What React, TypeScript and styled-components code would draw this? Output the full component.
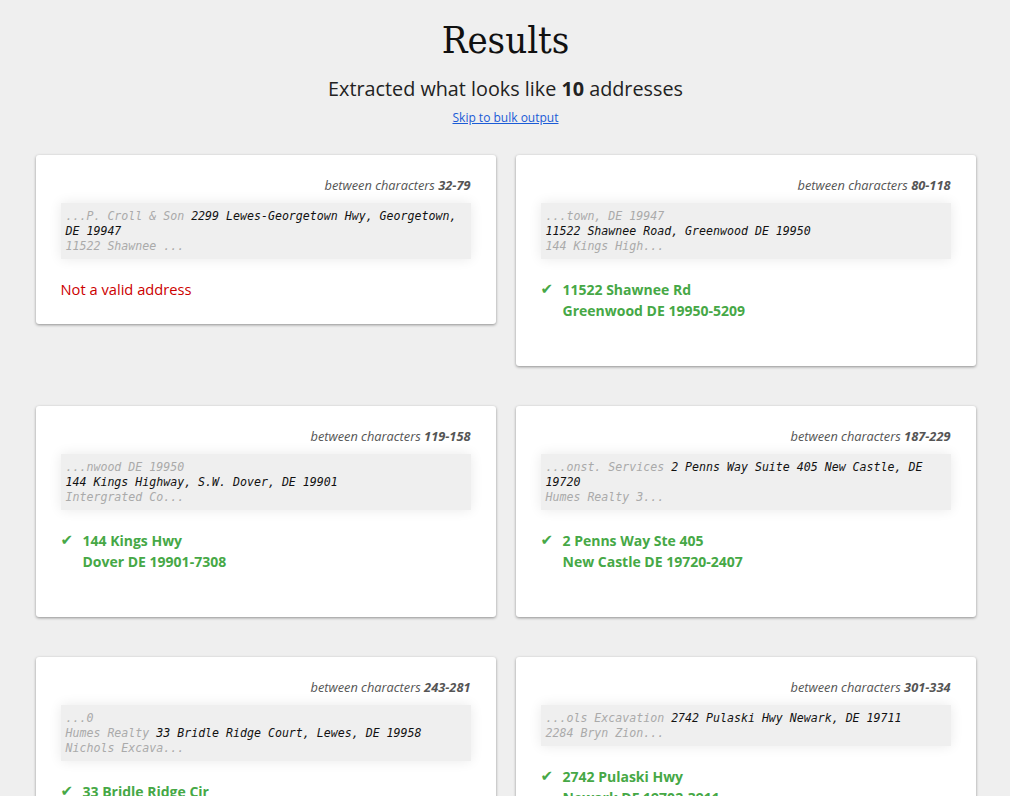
import React from "react";
import styled, { createGlobalStyle } from "styled-components";

const Global = createGlobalStyle`
  html, body { margin: 0; padding: 0; background: #efefef; }
  body { font-family: "Open Sans", "Liberation Sans", sans-serif; color: #222; }
`;

const Page = styled.div`
  width: 940px;
  margin: 0 auto;
  padding: 0 0 40px 1px;
`;

const Header = styled.header`
  text-align: center;
  padding-top: 17px;
`;

const Title = styled.h1`
  margin: 0;
  font-family: "DejaVu Serif Condensed", "DejaVu Serif", serif;
  font-weight: normal;
  font-size: 38px;
  line-height: 46px;
  color: #111;
`;

const Subtitle = styled.p`
  margin: 12px 0 0;
  font-size: 19.8px;
  line-height: 28px;
  color: #222;
  b { font-weight: 700; }
`;

const SkipLink = styled.a`
  display: inline-block;
  margin-top: 7px;
  font-size: 12px;
  line-height: 16px;
  color: #1a5bd6;
  text-decoration: underline;
`;

const Grid = styled.div`
  display: grid;
  grid-template-columns: 460px 460px;
  column-gap: 20px;
  row-gap: 40px;
  align-items: start;
  margin-top: 28px;
`;

const Card = styled.section`
  background: #fff;
  border-radius: 3px;
  box-shadow: 0 1px 3px rgba(0, 0, 0, 0.4);
  padding: 22px 25px 24px;
`;

const Range = styled.div`
  text-align: right;
  font-style: italic;
  font-size: 12.8px;
  line-height: 17px;
  color: #555;
  b { font-weight: 700; }
`;

const Snippet = styled.pre`
  margin: 9px 0 0;
  padding: 6px 5px 5px;
  background: #efefef;
  box-shadow: 0 0 12px rgba(0, 0, 0, 0.09);
  font-family: "DejaVu Sans Mono", "Liberation Mono", monospace;
  font-style: italic;
  font-size: 11.6px;
  line-height: 15px;
  color: #111;
  white-space: pre-wrap;
  word-wrap: break-word;
`;

const Context = styled.span`
  color: #aaa;
`;

const Invalid = styled.div`
  margin-top: 20px;
  font-size: 14.7px;
  line-height: 21px;
  color: #cc0000;
`;

const Valid = styled.div`
  margin-top: 20px;
  margin-bottom: 21px;
  display: flex;
  align-items: flex-start;
  font-size: 14px;
  line-height: 21px;
  font-weight: 700;
  color: #46a846;
`;

const Check = styled.span`
  width: 22px;
  flex: none;
  font-family: "DejaVu Sans", sans-serif;
  font-size: 15px;
  line-height: 21px;
`;

const Lines = styled.div`
  display: flex;
  flex-direction: column;
`;

type Result = {
  range: string;
  before: string;
  match: string;
  after: string;
  valid?: [string, string];
};

const results: Result[] = [
  {
    range: "32-79",
    before: "...P. Croll & Son ",
    match: "2299 Lewes-Georgetown Hwy, Georgetown, DE 19947",
    after: "\n11522 Shawnee ...",
  },
  {
    range: "80-118",
    before: "...town, DE 19947\n",
    match: "11522 Shawnee Road, Greenwood DE 19950",
    after: "\n144 Kings High...",
    valid: ["11522 Shawnee Rd", "Greenwood DE 19950-5209"],
  },
  {
    range: "119-158",
    before: "...nwood DE 19950\n",
    match: "144 Kings Highway, S.W. Dover, DE 19901",
    after: "\nIntergrated Co...",
    valid: ["144 Kings Hwy", "Dover DE 19901-7308"],
  },
  {
    range: "187-229",
    before: "...onst. Services ",
    match: "2 Penns Way Suite 405 New Castle, DE 19720",
    after: "\nHumes Realty 3...",
    valid: ["2 Penns Way Ste 405", "New Castle DE 19720-2407"],
  },
  {
    range: "243-281",
    before: "...0\nHumes Realty ",
    match: "33 Bridle Ridge Court, Lewes, DE 19958",
    after: "\nNichols Excava...",
    valid: ["33 Bridle Ridge Cir", "Lewes DE 19958-8961"],
  },
  {
    range: "301-334",
    before: "...ols Excavation ",
    match: "2742 Pulaski Hwy Newark, DE 19711",
    after: "\n2284 Bryn Zion...",
    valid: ["2742 Pulaski Hwy", "Newark DE 19702-3911"],
  },
];

export default function App() {
  return (
    <Page>
      <Global />
      <Header>
        <Title>Results</Title>
        <Subtitle>
          Extracted what looks like <b>10</b> addresses
        </Subtitle>
        <SkipLink href="#bulk">Skip to bulk output</SkipLink>
      </Header>
      <Grid>
        {results.map((r) => (
          <Card key={r.range}>
            <Range>
              between characters <b>{r.range}</b>
            </Range>
            <Snippet>
              <Context>{r.before}</Context>
              {r.match}
              <Context>{r.after}</Context>
            </Snippet>
            {r.valid ? (
              <Valid>
                <Check>✔</Check>
                <Lines>
                  <span>{r.valid[0]}</span>
                  <span>{r.valid[1]}</span>
                </Lines>
              </Valid>
            ) : (
              <Invalid>Not a valid address</Invalid>
            )}
          </Card>
        ))}
      </Grid>
    </Page>
  );
}
